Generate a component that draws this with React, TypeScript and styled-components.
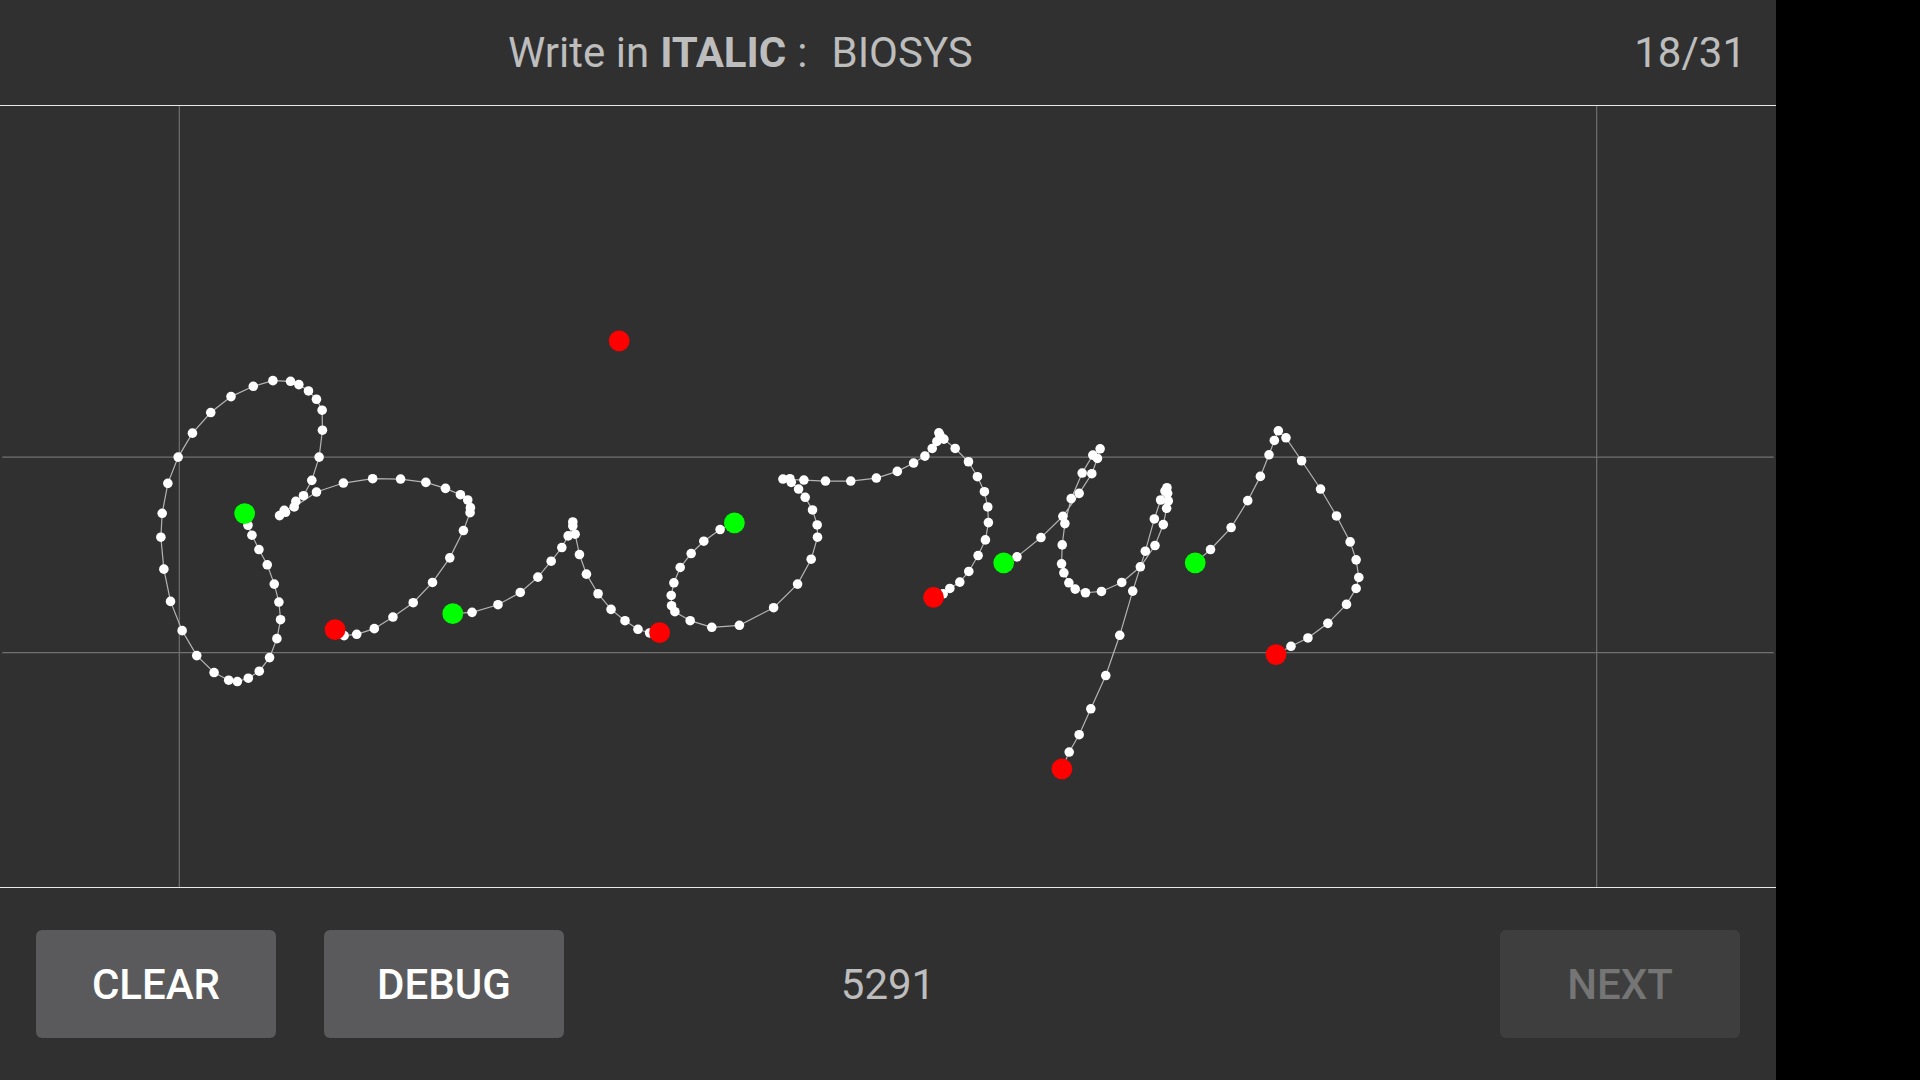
import React from "react";
import styled, { createGlobalStyle } from "styled-components";

type Pt = [number, number];

// traced from 3x crops: [origin x, origin y, crop points]
const crop = (ox: number, oy: number, pts: Pt[]): Pt[] =>
  pts.map(([x, y]) => [ox + x / 3, oy + y / 3]);

const strokes: Pt[][] = [
  [
    ...crop(130, 340, [
      [339, 521], [349, 556], [361, 586], [382, 629], [407, 675], [428, 733], [442, 787], [447, 840],
      [436, 897], [414, 954], [383, 995], [350, 1016], [317, 1026], [291, 1022], [247, 999], [195, 948],
      [151, 873], [116, 785], [96, 688], [87, 592], [91, 520], [108, 430], [139, 351], [182, 279],
      [237, 217], [298, 169], [365, 138], [424, 121], [477, 123], [502, 133], [531, 152], [555, 177],
      [572, 210], [573, 270], [563, 351], [541, 421], [516, 467], [493, 484], [462, 517], [444, 527],
      [458, 511], [488, 501], [555, 456], [636, 429], [724, 416], [808, 417], [884, 427], [943, 445],
      [988, 464], [1010, 480], [1018, 503], [1017, 518], [997, 572], [956, 654], [904, 728], [846, 789],
      [785, 832], [729, 867], [676, 884], [638, 888], [611, 870],
    ]),
  ],
  [
    ...crop(430, 470, [
      [65, 432], [123, 428], [201, 405], [268, 368], [321, 322], [361, 274], [393, 233], [412, 198],
      [426, 168], [426, 156], [433, 193], [446, 254], [467, 313], [502, 372], [541, 419], [583, 453],
      [622, 479], [657, 490], [687, 489],
    ]),
  ],
  [
    ...crop(430, 470, [
      [912, 159], [869, 179], [820, 214], [782, 251], [749, 293], [730, 339], [722, 377], [723, 408],
      [733, 426], [779, 453], [844, 473], [927, 467],
    ]),
    ...crop(760, 410, [
      [40, 594], [112, 523], [153, 448], [172, 382], [171, 345], [157, 300], [135, 262], [115, 237],
      [93, 217], [89, 206], [68, 207], [131, 210], [196, 213], [272, 213], [349, 204], [412, 184],
      [461, 159], [495, 138], [517, 115], [531, 94], [537, 68], [540, 75], [552, 87], [586, 115],
      [626, 155], [653, 200], [674, 245], [684, 291], [686, 338], [677, 390], [655, 437], [627, 485],
      [600, 517], [570, 536], [550, 552], [521, 563],
    ]),
  ],
  [
    ...crop(980, 420, [
      [72, 429], [112, 411], [184, 353], [250, 289], [299, 220], [337, 161], [354, 115], [362, 86],
      [340, 105], [308, 159], [275, 236], [256, 311], [248, 375], [246, 432], [253, 459], [268, 489],
      [287, 508], [318, 519], [366, 515], [427, 488], [483, 441], [527, 377], [552, 314], [562, 265],
      [567, 243], [565, 220], [563, 203], [557, 213], [544, 240], [525, 297], [498, 394], [460, 514],
      [421, 647], [379, 768], [334, 868], [299, 946], [269, 998], [247, 1049],
    ]),
  ],
  [
    ...crop(980, 420, [
      [648, 429], [694, 389], [756, 323], [806, 242], [844, 169], [870, 104], [886, 61], [898, 32],
      [921, 53], [968, 122], [1025, 207], [1073, 288], [1114, 366], [1132, 420], [1140, 473], [1132, 506],
      [1103, 554], [1047, 611], [987, 655], [936, 680], [891, 705],
    ]),
  ],
];

const Global = createGlobalStyle`
  html, body {
    margin: 0;
    background: #000;
  }
`;

const Screen = styled.div`
  width: 1776px;
  height: 1080px;
  display: flex;
  flex-direction: column;
  background: #303030;
  color: #bdbdbd;
  font-family: Roboto, "Liberation Sans", sans-serif;
  font-size: 42px;
`;

const Header = styled.header`
  height: 105px;
  box-sizing: border-box;
  display: flex;
  align-items: center;
  justify-content: space-between;
  padding: 0 30px 0 508px;
`;

const Prompt = styled.div`
  display: flex;
  b {
    font-weight: 700;
    margin: 0 11px;
  }
`;

const Word = styled.span`
  margin-left: 24px;
`;

const Canvas = styled.svg`
  display: block;
  width: 1776px;
  height: 783px;
  box-sizing: border-box;
  border-top: 1px solid #e8e8e8;
  border-bottom: 1px solid #e8e8e8;
`;

const Footer = styled.footer`
  flex: 1;
  display: grid;
  grid-template-columns: 1fr auto 1fr;
  align-items: center;
  padding: 0 36px;
`;

const Buttons = styled.div<{ $end?: boolean }>`
  display: flex;
  gap: 48px;
  justify-content: ${(p) => (p.$end ? "flex-end" : "flex-start")};
`;

const Button = styled.button<{ $off?: boolean }>`
  width: 240px;
  height: 108px;
  border: 0;
  border-radius: 6px;
  padding: 0;
  font: 500 42px Roboto, "Liberation Sans", sans-serif;
  background: ${(p) => (p.$off ? "#3e3e3e" : "#5a5a5c")};
  color: ${(p) => (p.$off ? "#757575" : "#fff")};
`;

const guide = "#707070";

function Trace() {
  return (
    <Canvas viewBox="0 105 1776 783">
      <g stroke={guide} strokeWidth="1.2">
        <line x1="177.5" y1="105" x2="177.5" y2="888" />
        <line x1="1598.5" y1="105" x2="1598.5" y2="888" />
        <line x1="0" y1="457" x2="1776" y2="457" />
        <line x1="0" y1="653" x2="1776" y2="653" />
      </g>
      {strokes.map((pts, i) => (
        <polyline key={i} points={pts.map((p) => p.join(",")).join(" ")} fill="none" stroke="#b4b4b4" strokeWidth="1.2" />
      ))}
      {strokes.map((pts, i) =>
        pts.slice(1, -1).map(([x, y], j) => <circle key={`${i}-${j}`} cx={x} cy={y} r="4.8" fill="#fff" />)
      )}
      {strokes.map((pts, i) => (
        <g key={i}>
          <circle cx={pts[0][0]} cy={pts[0][1]} r="10.4" fill="#00ff00" />
          <circle cx={pts[pts.length - 1][0]} cy={pts[pts.length - 1][1]} r="10.4" fill="#ff0000" />
        </g>
      ))}
      <circle cx="618.5" cy="340.5" r="10.4" fill="#ff0000" />
    </Canvas>
  );
}

export default function App() {
  return (
    <Screen>
      <Global />
      <Header>
        <Prompt>
          Write in<b>ITALIC</b>:<Word>BIOSYS</Word>
        </Prompt>
        <span>18/31</span>
      </Header>
      <Trace />
      <Footer>
        <Buttons>
          <Button>CLEAR</Button>
          <Button>DEBUG</Button>
        </Buttons>
        <span>5291</span>
        <Buttons $end>
          <Button $off>NEXT</Button>
        </Buttons>
      </Footer>
    </Screen>
  );
}
